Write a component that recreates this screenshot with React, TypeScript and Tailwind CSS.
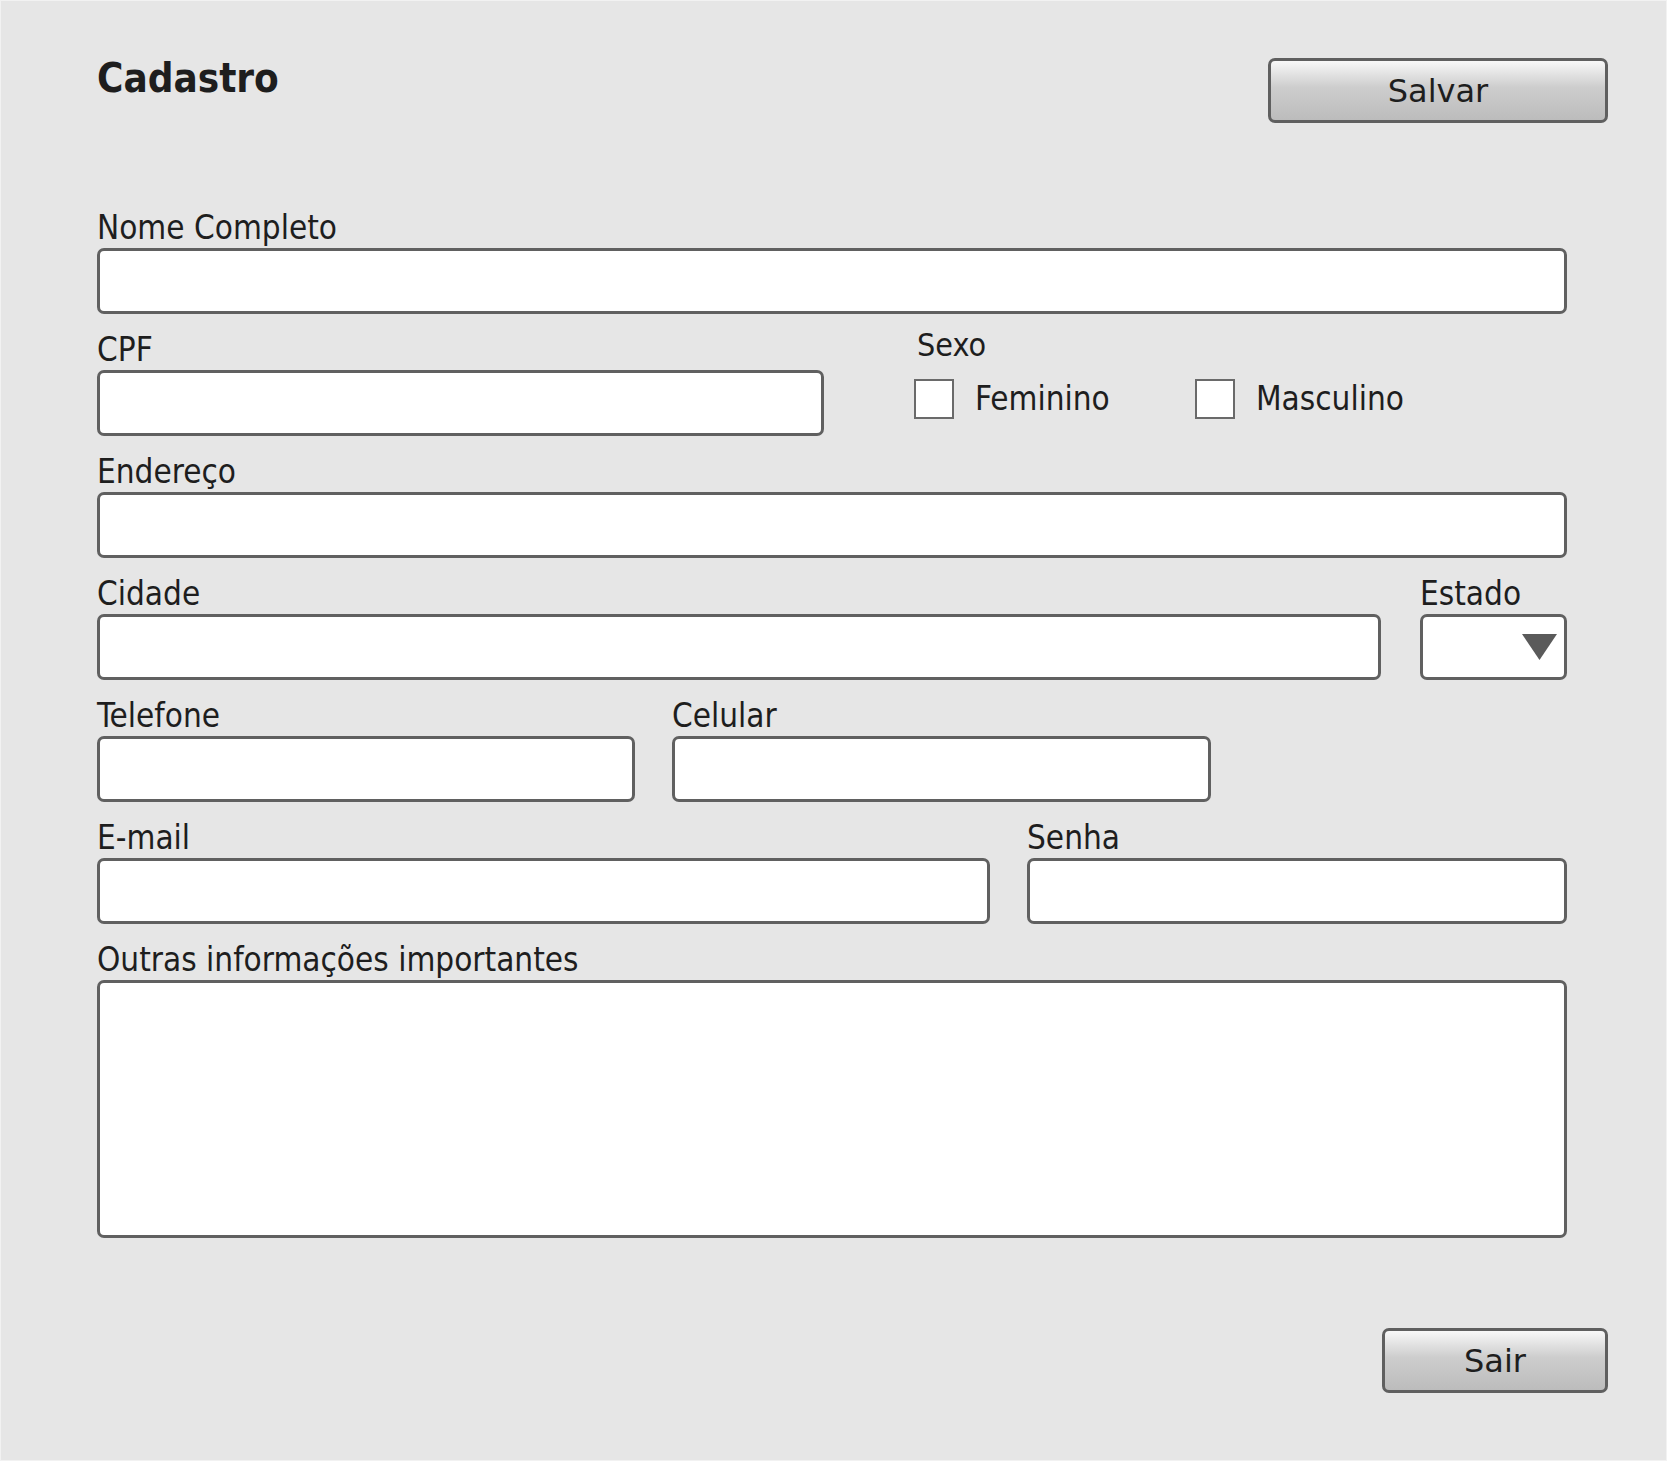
import React from "react";

const labelCls =
  "block whitespace-nowrap text-[33px] leading-[38px] text-[#1e1e1e] font-['DejaVu_Sans_Condensed','DejaVu_Sans',sans-serif]";
const boxCls =
  "block w-full h-[66px] bg-white border-[3px] border-[#606060] rounded-[7px] outline-none";
const btnCls =
  "flex items-center justify-center h-[65px] border-[3px] border-[#5f5f5f] rounded-[7px] bg-linear-to-b from-[#f8f8f8] via-[#cdcdcd] via-45% to-[#bcbcbc] text-[32px] text-[#1e1e1e] font-['DejaVu_Sans',sans-serif]";

const Field = ({ label, className }: { label: string; className?: string }) => (
  <div className={className}>
    <label className={labelCls}>{label}</label>
    <input type="text" className={`${boxCls} mt-[1px]`} />
  </div>
);

const Check = ({ label, className }: { label: string; className?: string }) => (
  <label className={`flex items-center gap-[21px] ${className ?? ""}`}>
    <input
      type="checkbox"
      className="appearance-none w-[40px] h-[40px] bg-white border-2 border-[#6a6a6a] shrink-0"
    />
    <span className="text-[33px] leading-[36px] text-[#1e1e1e] font-['DejaVu_Sans_Condensed','DejaVu_Sans',sans-serif]">
      {label}
    </span>
  </label>
);

const App = () => {
  return (
    <div className="w-full h-[1461px] bg-[#e6e6e6] border border-[#f2f2f2] pl-[96px] pr-[58px] pt-[53px]">
      <header className="flex justify-between items-start">
        <h1 className="text-[40px] leading-[48px] font-bold text-[#1e1e1e] font-['DejaVu_Sans_Condensed','DejaVu_Sans',sans-serif]">
          Cadastro
        </h1>
        <button className={`${btnCls} w-[340px] mt-[4px]`}>Salvar</button>
      </header>

      <form className="w-[1470px] mt-[86px] flex flex-col gap-[17px]">
        <Field label="Nome Completo" />

        <div className="flex">
          <Field label="CPF" className="w-[727px]" />
          <div className="ml-[90px]">
            <span className="block ml-[3px] text-[32px] leading-[28px] text-[#1e1e1e] font-['DejaVu_Sans_Condensed','DejaVu_Sans',sans-serif]">
              Sexo
            </span>
            <div className="flex mt-[20px]">
              <Check label="Feminino" className="w-[281px]" />
              <Check label="Masculino" />
            </div>
          </div>
        </div>

        <Field label="Endereço" />

        <div className="flex gap-[39px]">
          <Field label="Cidade" className="flex-1" />
          <div className="w-[147px]">
            <label className={labelCls}>Estado</label>
            <div className={`${boxCls} mt-[1px] flex items-center justify-end pr-[7px]`}>
              <svg width="35" height="26" viewBox="0 0 35 26">
                <polygon points="0,0 35,0 17.5,26" fill="#5a5a5a" />
              </svg>
            </div>
          </div>
        </div>

        <div className="flex gap-[37px]">
          <Field label="Telefone" className="w-[538px]" />
          <Field label="Celular" className="w-[539px]" />
        </div>

        <div className="flex gap-[37px]">
          <Field label="E-mail" className="flex-1" />
          <Field label="Senha" className="w-[540px]" />
        </div>

        <div>
          <label className={labelCls}>Outras informações importantes</label>
          <textarea className="block w-full h-[258px] mt-[1px] bg-white border-[3px] border-[#606060] rounded-[7px] resize-none outline-none" />
        </div>
      </form>

      <div className="flex justify-end mt-[90px]">
        <button className={`${btnCls} w-[226px] h-[64px]`}>Sair</button>
      </div>
    </div>
  );
};

export default App;
